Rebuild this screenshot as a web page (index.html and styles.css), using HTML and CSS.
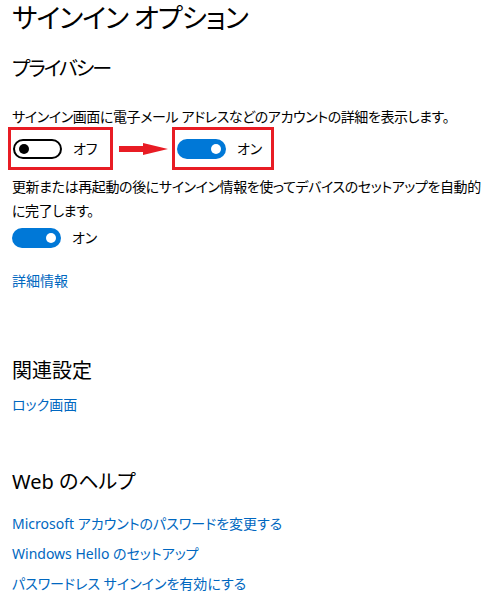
FILE: index.html
```html
<!DOCTYPE html>
<html lang="ja">
<head>
<meta charset="utf-8">
<title>サインイン オプション</title>
<link rel="stylesheet" href="styles.css">
</head>
<body>
<main class="page">
  <h1 class="title">サインイン オプション</h1>
  <h2 class="section section-privacy">プライバシー</h2>
  <p class="desc desc-first">サインイン画面に電子メール アドレスなどのアカウントの詳細を表示します。</p>
  <div class="compare">
    <div class="frame frame-off">
      <span class="toggle toggle-off"><span class="knob"></span></span>
      <span class="state">オフ</span>
    </div>
    <svg class="arrow" width="50" height="14" viewBox="0 0 50 14">
      <rect x="0" y="4" width="26" height="6" fill="#e81c24"/>
      <polygon points="24,1 49,7 24,13" fill="#e81c24"/>
    </svg>
    <div class="frame frame-on">
      <span class="toggle toggle-on"><span class="knob"></span></span>
      <span class="state">オン</span>
    </div>
  </div>
  <p class="desc desc-second">更新または再起動の後にサインイン情報を使ってデバイスのセットアップを自動的に完了します。</p>
  <div class="toggle-row">
    <span class="toggle toggle-on"><span class="knob"></span></span>
    <span class="state">オン</span>
  </div>
  <a class="link link-more" href="#">詳細情報</a>
  <h2 class="section section-related">関連設定</h2>
  <a class="link link-lock" href="#">ロック画面</a>
  <h2 class="section section-help">Web のヘルプ</h2>
  <a class="link link-help1" href="#">Microsoft アカウントのパスワードを変更する</a>
  <a class="link link-help" href="#">Windows Hello のセットアップ</a>
  <a class="link link-help" href="#">パスワードレス サインインを有効にする</a>
</main>
</body>
</html>
```

FILE: styles.css
```css
* { box-sizing: border-box; }

html, body {
  margin: 0;
  padding: 0;
  background: #ffffff;
}

body {
  font-family: "Noto Sans", "Noto Sans CJK JP", sans-serif;
  font-feature-settings: "palt";
  color: #000000;
  width: 500px;
  height: 597px;
  overflow: hidden;
}

.page {
  display: flex;
  flex-direction: column;
  align-items: flex-start;
  padding-left: 12px;
}

.title {
  margin: 0;
  font-size: 27px;
  font-weight: 400;
  line-height: 36px;
  letter-spacing: -1px;
  color: #000;
}

.section {
  margin: 0;
  font-size: 20px;
  font-weight: 400;
  line-height: 28px;
  color: #000;
}

.section-privacy {
  margin-top: 19px;
  letter-spacing: -2px;
}
.section-related { margin-top: 66px; }
.section-help { margin-top: 53px; }

.desc {
  margin: 0;
  font-size: 14px;
  line-height: 20px;
  letter-spacing: -0.4px;
  width: 476px;
}

.desc-first { margin-top: 24px; }

.desc-second {
  margin-top: 5px;
  line-height: 24px;
}

.compare {
  display: flex;
  align-items: center;
  margin-left: -4px;
}

.frame {
  display: flex;
  align-items: center;
  height: 43px;
  border: 3px solid #e81c24;
}

.frame-off {
  width: 105px;
  padding-left: 2px;
}

.frame-on {
  width: 102px;
  padding-left: 2px;
  margin-left: 3px;
}

.arrow {
  display: block;
  margin-left: 6px;
}

.toggle {
  position: relative;
  display: inline-block;
  width: 49px;
  height: 20px;
  border-radius: 10px;
  flex: none;
}

.toggle-off {
  border: 2px solid #000;
  background: #fff;
}

.toggle-on {
  background: #0078d7;
}

.knob {
  position: absolute;
  top: 50%;
  width: 10px;
  height: 10px;
  margin-top: -5px;
  border-radius: 50%;
}

.toggle-off .knob {
  left: 4px;
  background: #000;
}

.toggle-on .knob {
  right: 5px;
  background: #fff;
}

.state {
  font-size: 14px;
  line-height: 20px;
  margin-left: 11px;
}

.toggle-row {
  display: flex;
  align-items: center;
  margin-top: 5px;
  height: 20px;
}

.link {
  display: block;
  font-size: 14px;
  line-height: 20px;
  color: #0067c0;
  text-decoration: none;
}

.link-more { margin-top: 23px; }
.link-lock { margin-top: 10px; }
.link-help1 { margin-top: 18px; }
.link-help { margin-top: 10px; }
```
